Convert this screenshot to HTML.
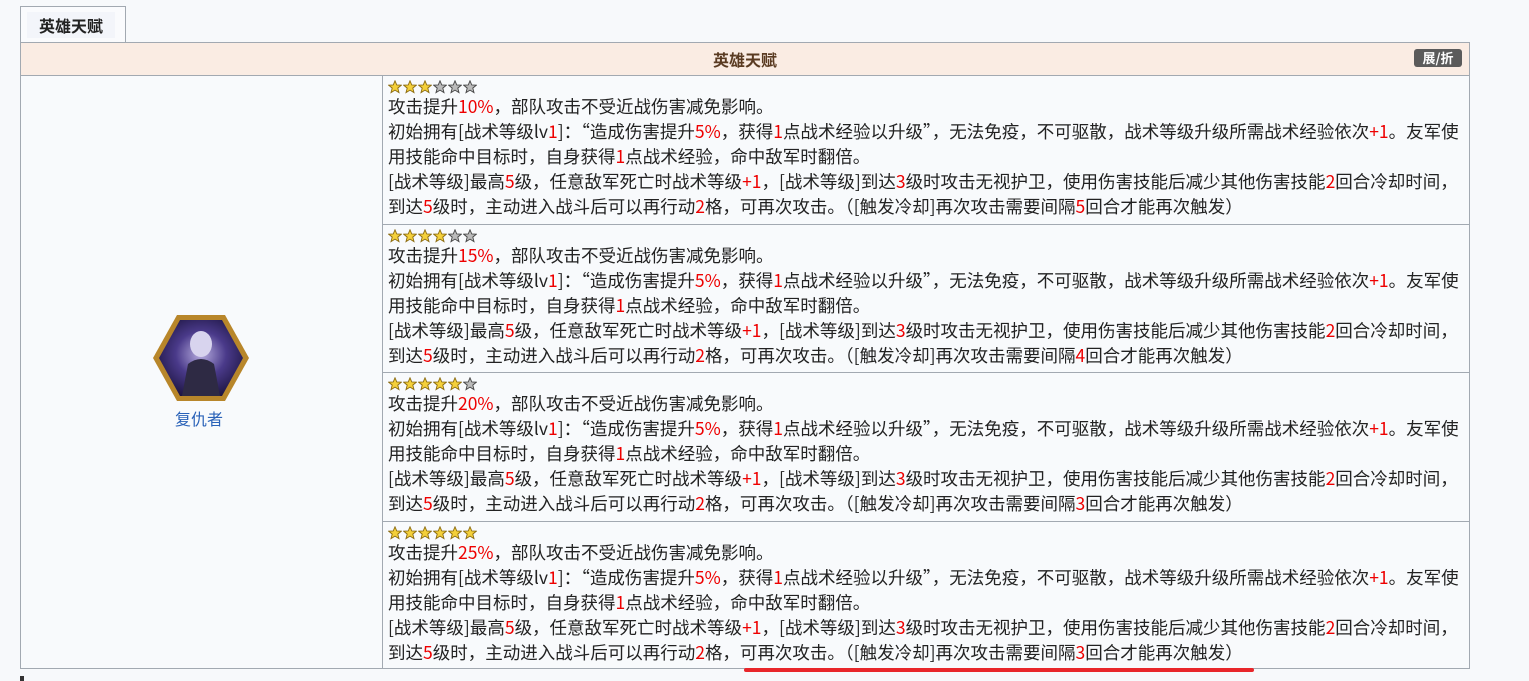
<!DOCTYPE html>
<html><head><meta charset="utf-8"><style>
body{margin:0;width:1529px;height:681px;background:#f7f9fb;font-family:"Noto Sans CJK SC","Liberation Sans",sans-serif;overflow:hidden;position:relative}
.tab{position:absolute;left:20px;top:6px;width:106px;height:37px;border:1px solid #a2a9b1;border-bottom:none;background:#fafbfd;box-sizing:border-box}
.tab span{position:absolute;left:6px;top:5px;width:88px;height:26px;background:#f3f5fa;font-weight:bold;font-size:16px;line-height:26px;text-align:center;color:#222}
.hdr{position:absolute;left:20px;top:42px;width:1450px;height:34px;background:#faece3;border:1px solid #a2a9b1;box-sizing:border-box;text-align:center;font-weight:bold;font-size:16px;line-height:33px;color:#5a3b22}
.btn{position:absolute;right:7px;top:6px;width:48px;height:18px;background:#5b5b5b;color:#fff;border-radius:3px;font-size:13px;line-height:18px}
.left{position:absolute;left:20px;top:75px;width:363px;height:594px;border:1px solid #a2a9b1;box-sizing:border-box;background:#f8fafc}
.row{position:absolute;left:382px;width:1088px;border:1px solid #a2a9b1;box-sizing:border-box;background:#f8fafc;padding:4px 0 0 5px;font-size:17.5px;line-height:25px;color:#222;white-space:nowrap}
.r{color:#e00}
.st{display:block;height:14px;margin-bottom:0px}
.name{position:absolute;left:175px;top:406px;color:#2a62b8;font-size:16px;line-height:24px}
.ul{position:absolute;left:744px;top:668px;width:510px;height:4px;background:#e8262a;border-radius:2px}
.bar{position:absolute;left:20px;top:676px;width:4px;height:5px;background:#333}
</style></head><body>
<svg width="0" height="0" style="position:absolute"><defs>
<symbol id="y" viewBox="0 0 14 14"><polygon points="7,0.8 8.8,5 13.3,5.2 9.8,8.1 11,12.6 7,10.1 3,12.6 4.2,8.1 0.7,5.2 5.2,5" fill="#f4d03a" stroke="#8a6a10" stroke-width="0.9"/></symbol>
<symbol id="g" viewBox="0 0 14 14"><polygon points="7,0.8 8.8,5 13.3,5.2 9.8,8.1 11,12.6 7,10.1 3,12.6 4.2,8.1 0.7,5.2 5.2,5" fill="#bbb" stroke="#444" stroke-width="0.9"/></symbol>
</defs></svg>
<div class="tab"><span>英雄天赋</span></div>
<div class="hdr">英雄天赋<div class="btn">展/折</div></div>
<div class="left"></div>
<svg style="position:absolute;left:152px;top:314px" width="98" height="88" viewBox="0 0 98 88">
<defs><radialGradient id="gr" cx="50%" cy="45%" r="60%"><stop offset="0" stop-color="#b8aee0"/><stop offset="0.5" stop-color="#4a3a8a"/><stop offset="1" stop-color="#1c1440"/></radialGradient></defs>
<polygon points="25,1 73,1 97,44 73,87 25,87 1,44" fill="#b8862a"/>
<polygon points="28,6 70,6 91,44 70,82 28,82 7,44" fill="url(#gr)"/>
<ellipse cx="49" cy="30" rx="11" ry="13" fill="#d8d4ee"/>
<path d="M30,82 L36,50 Q49,40 62,50 L68,82 Z" fill="#2e2a44"/>
</svg>
<div class="name">复仇者</div>

<div class="row" style="top:75px;height:150px">
<svg class="st" width="90" height="14"><use href="#y" x="0" width="14" height="14"/><use href="#y" x="15" width="14" height="14"/><use href="#y" x="30" width="14" height="14"/><use href="#g" x="45" width="14" height="14"/><use href="#g" x="60" width="14" height="14"/><use href="#g" x="75" width="14" height="14"/></svg>
攻击提升<span class="r">10%</span>，部队攻击不受近战伤害减免影响。<br>
初始拥有[战术等级lv<span class="r">1</span>]：“造成伤害提升<span class="r">5%</span>，获得<span class="r">1</span>点战术经验以升级”，无法免疫，不可驱散，战术等级升级所需战术经验依次<span class="r">+1</span>。友军使<br>
用技能命中目标时，自身获得<span class="r">1</span>点战术经验，命中敌军时翻倍。<br>
[战术等级]最高<span class="r">5</span>级，任意敌军死亡时战术等级<span class="r">+1</span>，[战术等级]到达<span class="r">3</span>级时攻击无视护卫，使用伤害技能后减少其他伤害技能<span class="r">2</span>回合冷却时间，<br>
到达<span class="r">5</span>级时，主动进入战斗后可以再行动<span class="r">2</span>格，可再次攻击。（[触发冷却]再次攻击需要间隔<span class="r">5</span>回合才能再次触发）
</div>

<div class="row" style="top:224px;height:149px">
<svg class="st" width="90" height="14"><use href="#y" x="0" width="14" height="14"/><use href="#y" x="15" width="14" height="14"/><use href="#y" x="30" width="14" height="14"/><use href="#y" x="45" width="14" height="14"/><use href="#g" x="60" width="14" height="14"/><use href="#g" x="75" width="14" height="14"/></svg>
攻击提升<span class="r">15%</span>，部队攻击不受近战伤害减免影响。<br>
初始拥有[战术等级lv<span class="r">1</span>]：“造成伤害提升<span class="r">5%</span>，获得<span class="r">1</span>点战术经验以升级”，无法免疫，不可驱散，战术等级升级所需战术经验依次<span class="r">+1</span>。友军使<br>
用技能命中目标时，自身获得<span class="r">1</span>点战术经验，命中敌军时翻倍。<br>
[战术等级]最高<span class="r">5</span>级，任意敌军死亡时战术等级<span class="r">+1</span>，[战术等级]到达<span class="r">3</span>级时攻击无视护卫，使用伤害技能后减少其他伤害技能<span class="r">2</span>回合冷却时间，<br>
到达<span class="r">5</span>级时，主动进入战斗后可以再行动<span class="r">2</span>格，可再次攻击。（[触发冷却]再次攻击需要间隔<span class="r">4</span>回合才能再次触发）
</div>

<div class="row" style="top:372px;height:150px">
<svg class="st" width="90" height="14"><use href="#y" x="0" width="14" height="14"/><use href="#y" x="15" width="14" height="14"/><use href="#y" x="30" width="14" height="14"/><use href="#y" x="45" width="14" height="14"/><use href="#y" x="60" width="14" height="14"/><use href="#g" x="75" width="14" height="14"/></svg>
攻击提升<span class="r">20%</span>，部队攻击不受近战伤害减免影响。<br>
初始拥有[战术等级lv<span class="r">1</span>]：“造成伤害提升<span class="r">5%</span>，获得<span class="r">1</span>点战术经验以升级”，无法免疫，不可驱散，战术等级升级所需战术经验依次<span class="r">+1</span>。友军使<br>
用技能命中目标时，自身获得<span class="r">1</span>点战术经验，命中敌军时翻倍。<br>
[战术等级]最高<span class="r">5</span>级，任意敌军死亡时战术等级<span class="r">+1</span>，[战术等级]到达<span class="r">3</span>级时攻击无视护卫，使用伤害技能后减少其他伤害技能<span class="r">2</span>回合冷却时间，<br>
到达<span class="r">5</span>级时，主动进入战斗后可以再行动<span class="r">2</span>格，可再次攻击。（[触发冷却]再次攻击需要间隔<span class="r">3</span>回合才能再次触发）
</div>

<div class="row" style="top:521px;height:148px">
<svg class="st" width="90" height="14"><use href="#y" x="0" width="14" height="14"/><use href="#y" x="15" width="14" height="14"/><use href="#y" x="30" width="14" height="14"/><use href="#y" x="45" width="14" height="14"/><use href="#y" x="60" width="14" height="14"/><use href="#y" x="75" width="14" height="14"/></svg>
攻击提升<span class="r">25%</span>，部队攻击不受近战伤害减免影响。<br>
初始拥有[战术等级lv<span class="r">1</span>]：“造成伤害提升<span class="r">5%</span>，获得<span class="r">1</span>点战术经验以升级”，无法免疫，不可驱散，战术等级升级所需战术经验依次<span class="r">+1</span>。友军使<br>
用技能命中目标时，自身获得<span class="r">1</span>点战术经验，命中敌军时翻倍。<br>
[战术等级]最高<span class="r">5</span>级，任意敌军死亡时战术等级<span class="r">+1</span>，[战术等级]到达<span class="r">3</span>级时攻击无视护卫，使用伤害技能后减少其他伤害技能<span class="r">2</span>回合冷却时间，<br>
到达<span class="r">5</span>级时，主动进入战斗后可以再行动<span class="r">2</span>格，可再次攻击。（[触发冷却]再次攻击需要间隔<span class="r">3</span>回合才能再次触发）
</div>
<div class="ul"></div>
<div class="bar"></div>
</body></html>
